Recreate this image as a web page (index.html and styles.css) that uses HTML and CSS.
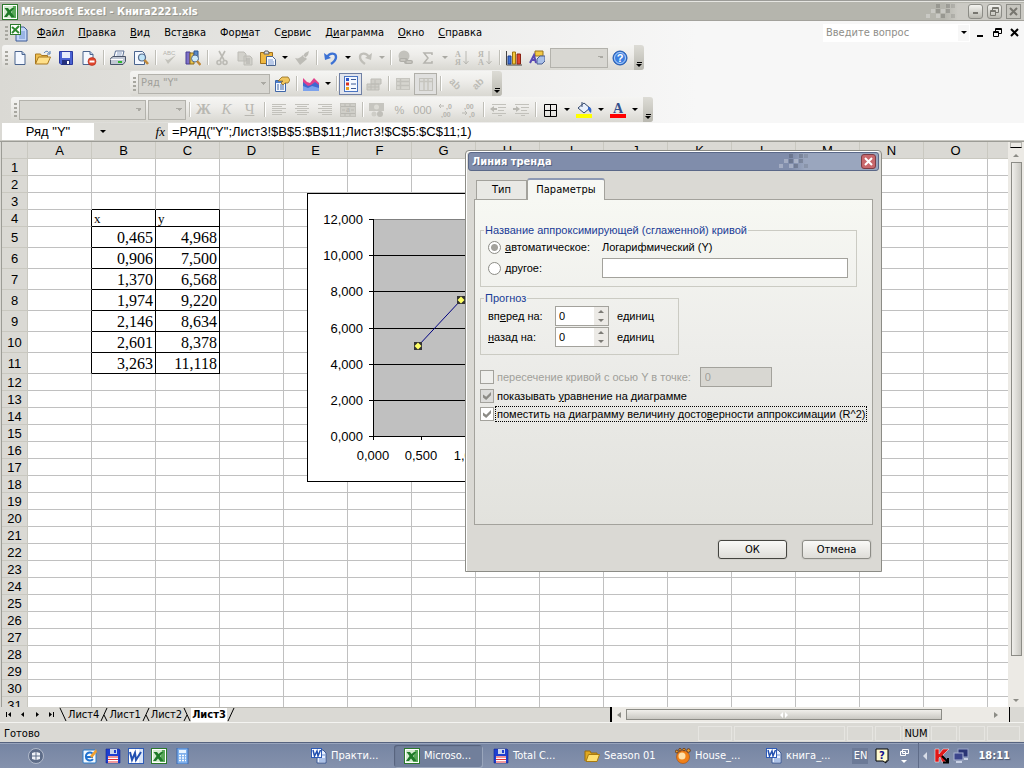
FILE: index.html
```html
<!DOCTYPE html>
<html lang="ru">
<head>
<meta charset="utf-8">
<title>Microsoft Excel - Книга2221.xls</title>
<link rel="stylesheet" href="styles.css">
</head>
<body>
<svg class="sprite" aria-hidden="true">
  <symbol id="i-excel" viewBox="0 0 16 16"><rect x=".5" y=".5" width="15" height="15" fill="#fff" stroke="#2c7a2c"/><rect x="2" y="2" width="12" height="12" fill="#d4ead0"/><path d="M11 2h3v12H9z" fill="#58a858"/><path d="M2.500 4H6l1.500 2L10 4h2.500L9 8l3.500 5H9L7 10.500 5 13H2l3.500-5z" fill="#1f7a28"/></symbol>
  <symbol id="i-word" viewBox="0 0 16 16"><rect x=".5" y=".5" width="15" height="15" fill="#fff" stroke="#2f5cb8"/><rect x="11" y="1" width="4" height="14" fill="#dbe6f8"/><path d="M2 4l2 8 3-7 1 7 5-8" fill="none" stroke="#2250b0" stroke-width="2"/></symbol>
  <symbol id="i-xldoc" viewBox="0 0 18 18"><path d="M6 3h8l3 3v11H6z" fill="#c4d6f8" stroke="#3c5a96"/><path d="M9 8h6M9 10h6M9 12h6M9 14h6" stroke="#6f92d0"/><rect x=".5" y=".5" width="10" height="10" fill="#fff" stroke="#2c7a2c"/><path d="M2 3l7 6M9 2L2 9" stroke="#2f8a30" stroke-width="2"/></symbol>
  <symbol id="i-wdoc" viewBox="0 0 16 16"><path d="M6 2h6l3 3v10H6z" fill="#e8f0ff" stroke="#3c5a96"/><path d="M11 7h3M8 11h6M8 13h6" stroke="#6f92d0"/><rect x=".5" y=".5" width="10" height="9" fill="#fff" stroke="#2f5cb8"/><path d="M2 2l1.500 6L6 3l1 5 2.500-6" fill="none" stroke="#2250b0" stroke-width="1.500"/></symbol>
  <symbol id="i-new" viewBox="0 0 16 16"><path d="M3 1.500h7l3 3v10H3z" fill="#f4f8ff" stroke="#4a648e"/><path d="M10 1.500v3h3" fill="#b9cbe8" stroke="#4a648e"/></symbol>
  <symbol id="i-open" viewBox="0 0 16 16"><path d="M.5 14V4h5l1 1.500h6V8" fill="#f0c050" stroke="#a87820"/><path d="M.5 14l3-7H15.500l-3 7z" fill="#ffe08a" stroke="#a87820"/><path d="M9 3c2-2.500 4-2 5 0m1-2v3h-3" fill="none" stroke="#4a76b0"/></symbol>
  <symbol id="i-save" viewBox="0 0 16 16"><path d="M1.500 1.500h13v13H3l-1.500-1.500z" fill="#4a62d2" stroke="#2b3aa0"/><rect x="4" y="2" width="8" height="6" fill="#e6ecfb"/><rect x="4" y="10" width="8" height="5" fill="#24307c"/><rect x="9" y="11" width="2" height="3" fill="#fff"/></symbol>
  <symbol id="i-perm" viewBox="0 0 16 16"><path d="M2 1.500h7l3 3v10H2z" fill="#f4f8ff" stroke="#4a648e"/><path d="M9 1.500v3h3" fill="#b9cbe8" stroke="#4a648e"/><circle cx="11" cy="11.500" r="4" fill="#e0452c" stroke="#b02a18" stroke-width=".6"/><path d="M8.500 11.500h5" stroke="#fff" stroke-width="2"/></symbol>
  <symbol id="i-print" viewBox="0 0 16 16"><path d="M4 7l1.500-6H14l-1.500 6z" fill="#fff" stroke="#5a6f94"/><path d="M7 3h5M6.500 5h5" stroke="#8ba0c4"/><path d="M.5 8.500L3 6.500h12.500v5L13 14.500H.5z" fill="#c2c8d4" stroke="#4a5468"/><path d="M.5 9.500H13" stroke="#fff"/><path d="M8 12h4" stroke="#2fb52f" stroke-width="2"/></symbol>
  <symbol id="i-preview" viewBox="0 0 16 16"><path d="M1.500 1.500h8l2 2v11h-10z" fill="#f4f8ff" stroke="#4a648e"/><circle cx="9" cy="7.500" r="3.500" fill="#bfe4f8" stroke="#566b8c" stroke-width="1.200"/><path d="M11.500 10l3.500 4" stroke="#c08838" stroke-width="2.500"/></symbol>
  <symbol id="i-spell" viewBox="0 0 16 16"><text x="1" y="5" class="glyph-s">ABC</text><path d="M3 9l3 5 8-9-8 5z" fill="#c3c2bb"/></symbol>
  <symbol id="i-research" viewBox="0 0 16 16"><path d="M1 2h4v12H1z" fill="#7d70c8" stroke="#483c92"/><path d="M5 3h4v11H5z" fill="#e8c24c" stroke="#8a6b1a"/><path d="M9 1h4v9H9z" fill="#5a89c8" stroke="#2d568e"/><circle cx="10" cy="8.500" r="3.500" fill="#cdeafa" stroke="#566b8c"/><path d="M12 11l3.500 4" stroke="#c08838" stroke-width="2.500"/></symbol>
  <symbol id="i-cut" viewBox="0 0 16 16"><g fill="none" stroke="#bbbab4" stroke-width="1.600"><path d="M5 1l5 9M11 1L6 10"/><circle cx="5" cy="12.500" r="2"/><circle cx="11" cy="12.500" r="2"/></g></symbol>
  <symbol id="i-copy" viewBox="0 0 16 16"><path d="M1 2h6l2 2v7H1zM7 6h6l2 2v7H7z" fill="#d2d1cb" stroke="#bdbcb6"/><path d="M9 9h4M9 11h4M9 13h4" stroke="#b0afaa"/></symbol>
  <symbol id="i-paste" viewBox="0 0 16 16"><path d="M.5 2.500h12v11H.5z" fill="#f0b840" stroke="#a0701c"/><path d="M4 3l1-2h3l1 2v1H4z" fill="#d8dce4" stroke="#66615a"/><path d="M6.500 6.500h6l3 3v6h-9z" fill="#f6f9ff" stroke="#4a648e"/><path d="M8 10h5M8 12h6M8 14h6" stroke="#7c9ad0"/></symbol>
  <symbol id="i-brush" viewBox="0 0 16 16"><path d="M15 1l-4 2-2 3 2 2 3-3zM9 5l4 4-7 6-5-7c3 1 5 0 8-3z" fill="#bdbcb6"/></symbol>
  <symbol id="i-undo" viewBox="0 0 16 16"><path d="M4 7c3-5 9-4 9 0 0 3-2 5-5 7" fill="none" stroke="#3d72d4" stroke-width="2.400"/><path d="M1 3l1 7 6-2z" fill="#3d72d4"/></symbol>
  <symbol id="i-redo" viewBox="0 0 16 16"><path d="M12 7C9 2 3 3 3 7c0 3 2 5 5 7" fill="none" stroke="#c0bfb9" stroke-width="2.400"/><path d="M15 3l-1 7-6-2z" fill="#c0bfb9"/></symbol>
  <symbol id="i-link" viewBox="0 0 16 16"><circle cx="7" cy="6" r="5.500" fill="#c3c2bc"/><path d="M4 10h5M9 12h5" stroke="#b0afa9" stroke-width="4" stroke-linecap="round"/><path d="M4 10h4M10 12h4" stroke="#dedcd6" stroke-linecap="round"/></symbol>
  <symbol id="i-sum" viewBox="0 0 16 16"><path d="M12 5V3H4l4 5-4 5h8v-2" fill="none" stroke="#b5b4ae" stroke-width="1.500"/></symbol>
  <symbol id="i-az" viewBox="0 0 16 16"><text x="1" y="7" class="glyph-m">А</text><text x="1" y="15" class="glyph-m">Я</text><path d="M12 1v13M9.500 11l2.500 3 2.500-3" fill="none" stroke="#b9b8b2"/></symbol>
  <symbol id="i-za" viewBox="0 0 16 16"><text x="1" y="7" class="glyph-m">Я</text><text x="1" y="15" class="glyph-m">А</text><path d="M12 1v13M9.500 11l2.500 3 2.500-3" fill="none" stroke="#b9b8b2"/></symbol>
  <symbol id="i-chart" viewBox="0 0 16 16"><path d="M.5 1v14H16" fill="none" stroke="#444"/><path d="M2 6h3v8H2z" fill="#3f72d8" stroke="#1d3f8c"/><path d="M6.500 2h3v12h-3z" fill="#f5c83c" stroke="#9c7410"/><path d="M11 4h3.500v10H11z" fill="#e0452c" stroke="#8c2212"/></symbol>
  <symbol id="i-draw" viewBox="0 0 16 16"><path d="M6 1h8v5H6z" fill="#f3c944" stroke="#98741c"/><path d="M8 9l3-3h5v5l-3 3H8z" fill="#a9c0e8" stroke="#4a5f94"/><path d="M1 13L5 5l2 8M2.500 10h4" fill="none" stroke="#5a4bb4" stroke-width="2"/></symbol>
  <symbol id="i-help" viewBox="0 0 16 16"><circle cx="8" cy="8" r="7" fill="#3c7fe0" stroke="#1f56ac"/><circle cx="8" cy="8" r="5.500" fill="none" stroke="#d5e6fc" stroke-width=".8"/><text x="8" y="12" class="glyph-q">?</text></symbol>
  <symbol id="i-props" viewBox="0 0 16 16"><path d="M1.500 4.500h10v11h-10z" fill="#f4f8ff" stroke="#3e66a8"/><path d="M2 6h9" stroke="#4a7ed0" stroke-width="2"/><path d="M3 9h2M6 9h4M3 11h2M6 11h4M3 13h2M6 13h4" stroke="#3e66a8"/><path d="M4 5l4-4h6l2 3-2 3h-3L9 9 7 7l2-2z" fill="#f0c660" stroke="#8f6a20" stroke-width=".8"/></symbol>
  <symbol id="i-area" viewBox="0 0 16 16"><path d="M0 2l4 4 3 1 4-5 5 5v4H0z" fill="#e2408c"/><path d="M0 6l5 4 3-1 4-3 4 3v6H0z" fill="#3f68d0"/><path d="M0 10l5 2 4-2 7 2v3H0z" fill="#7ca2ec"/></symbol>
  <symbol id="i-legend" viewBox="0 0 16 16"><rect x="1.500" y=".5" width="13" height="15" fill="#f4f8ff" stroke="#4a74c0"/><path d="M3 2h3v3H3z" fill="#2f56c8"/><path d="M3 6.500h3v3H3z" fill="#d83020"/><path d="M3 11h3v3H3z" fill="#e8a020"/><path d="M8 3.500h5M8 8h5M8 12.500h5" stroke="#3c5a96"/></symbol>
  <symbol id="i-dtable" viewBox="0 0 16 16"><path d="M5 3h10v5H5zM1 8h12v6H1z" fill="#d0cfc9" stroke="#bdbcb6"/><path d="M5 8v6M9 4v10M2 11h11" stroke="#bdbcb6"/></symbol>
  <symbol id="i-rows" viewBox="0 0 16 16"><rect x="1.500" y="2.500" width="13" height="11" fill="#d6d5cf" stroke="#c6c5bf"/><path d="M2 5.500h12M5.500 3v10M2 9.500h12" stroke="#c2c1bb" stroke-width="1.500"/></symbol>
  <symbol id="i-cols" viewBox="0 0 16 16"><rect x="1.500" y="2.500" width="13" height="12" fill="#dcdcda" stroke="#c2c1bb"/><path d="M2 5.500h12M6 3v11M10 3v11" stroke="#c6c5bf" stroke-width="1.500"/></symbol>
  <symbol id="i-ang1" viewBox="0 0 16 16"><text x="8" y="11" transform="rotate(45 8 8)" class="glyph-l">ab</text></symbol>
  <symbol id="i-ang2" viewBox="0 0 16 16"><text x="8" y="11" transform="rotate(-45 8 8)" class="glyph-l">ab</text></symbol>
  <symbol id="i-left" viewBox="0 0 16 16"><path d="M1 2.500h14M1 4.500h10M1 6.500h14M1 8.500h10M1 10.500h14M1 12.500h10" stroke="#c2c1bb"/></symbol>
  <symbol id="i-center" viewBox="0 0 16 16"><path d="M1 2.500h14M3 4.500h10M1 6.500h14M3 8.500h10M1 10.500h14M3 12.500h10" stroke="#c2c1bb"/></symbol>
  <symbol id="i-right" viewBox="0 0 16 16"><path d="M1 2.500h14M5 4.500h10M1 6.500h14M5 8.500h10M1 10.500h14M5 12.500h10" stroke="#c2c1bb"/></symbol>
  <symbol id="i-merge" viewBox="0 0 16 16"><rect x=".5" y="1.500" width="15" height="13" fill="#cfcec8" stroke="#c2c1bb"/><path d="M1 4.500h14M1 11.500h14M5 2v2M10 2v2M5 12v2M10 12v2M2 8h3M11 8h3" stroke="#b9b8b2"/><text x="6" y="10" class="glyph-m">а</text></symbol>
  <symbol id="i-cur" viewBox="0 0 16 16"><rect x="0" y="1" width="15" height="8" fill="#c6c5bf"/><circle cx="7.500" cy="5" r="2.500" fill="#dcdbd5"/><circle cx="11" cy="12" r="3" fill="#c0bfb9"/><circle cx="5" cy="12" r="2.500" fill="#cecdc7"/></symbol>
  <symbol id="i-dec1" viewBox="0 0 16 16"><path d="M6 4H1m2-2L1 4l2 2" fill="none" stroke="#b9b8b2"/><text x="8" y="7" class="glyph-n">,0</text><text x="3" y="15" class="glyph-n">,00</text></symbol>
  <symbol id="i-dec2" viewBox="0 0 16 16"><text x="3" y="7" class="glyph-n">,00</text><path d="M1 11h5m-2-2l2 2-2 2" fill="none" stroke="#b9b8b2"/><text x="8" y="15" class="glyph-n">,0</text></symbol>
  <symbol id="i-ind1" viewBox="0 0 16 16"><path d="M2 2.500h14M8 5.500h8M8 8.500h6M2 11.500h14M8 13.500h4" stroke="#c2c1bb"/><path d="M0 7l4-3v2h3v2H4v2z" fill="#b9b8b2"/></symbol>
  <symbol id="i-ind2" viewBox="0 0 16 16"><path d="M2 2.500h14M8 5.500h8M8 8.500h6M2 11.500h14M8 13.500h4" stroke="#c2c1bb"/><path d="M7 7L3 4v2H0v2h3v2z" fill="#b9b8b2"/></symbol>
  <symbol id="i-borders" viewBox="0 0 16 16"><path d="M2.500 2.500h12v12h-12zM8.500 2v12M2 8.500h12" fill="none" stroke="#000"/></symbol>
  <symbol id="i-fill" viewBox="0 0 16 16"><path d="M2 6l6-5 6 5-6 5z" fill="#e8f0fc" stroke="#34496e"/><path d="M6 0v5" stroke="#34496e"/><path d="M12 5c3 0 4 2 3 6-2-1-2-3-3-3z" fill="#3768c8"/><rect x="0" y="12" width="16" height="4" fill="#ff0"/></symbol>
  <symbol id="i-font" viewBox="0 0 16 16"><text x="8" y="11" class="glyph-a">A</text><rect x="0" y="12" width="16" height="4" fill="red"/></symbol>
  <symbol id="i-floppy" viewBox="0 0 16 16"><path d="M1 1h13l1 1v13H1z" fill="#1f3fd0" stroke="#122690" stroke-width=".6"/><rect x="5" y="1" width="7" height="5" fill="#c8d4ec"/><rect x="9" y="2" width="2" height="3" fill="#1f3fd0"/><rect x="3" y="8" width="10" height="7" fill="#fff"/><path d="M3 9h10M3 11.500h10M3 14h10" stroke="#e03038"/></symbol>
  <symbol id="i-oe" viewBox="0 0 16 16"><rect x="1" y="2" width="13" height="13" rx="1" fill="#f4faff" stroke="#2a7ac8"/><path d="M11 11a4 4 0 1 1 0-5M4 9h7" fill="none" stroke="#1f72d0" stroke-width="2"/><path d="M8 8l6-7 1 3-5 6z" fill="#f0a030"/></symbol>
  <symbol id="i-calc" viewBox="0 0 16 16"><rect x="3" y="0" width="11" height="16" fill="#7fb0ec" stroke="#2d62b0" stroke-width=".8"/><rect x="5" y="2" width="7" height="3" fill="#e8f4ff"/><path d="M5 7.500h7M5 10h7M5 12.500h7" stroke="#fff" stroke-dasharray="2 1" stroke-width="1.500"/></symbol>
  <symbol id="i-folder" viewBox="0 0 16 16"><path d="M1 13V3h5l1 2h6v3" fill="#e0a820" stroke="#9a6c08"/><path d="M2 13.500L4.500 6.500H15.500L13 13.500z" fill="#ffe070" stroke="#a87a10"/></symbol>
  <symbol id="i-gom" viewBox="0 0 16 16"><circle cx="8" cy="9" r="6.500" fill="#f08018" stroke="#a84c08" stroke-width=".6"/><circle cx="7" cy="8" r="3.500" fill="#ffe0a8"/><g fill="#e8a030" stroke="#5a2c10" stroke-width=".8"><circle cx="1.800" cy="3.500" r="1.400"/><circle cx="5" cy="1.800" r="1.300"/><circle cx="9" cy="1.500" r="1.300"/><circle cx="13.500" cy="2.500" r="1.800"/></g></symbol>
  <symbol id="i-mosaic" viewBox="0 0 30 15"><g fill="#000" fill-opacity=".16"><path d="M10 0h4v4h-4zM20 5h4v4h-4zM15 10h4v4h-4zM20 0h4v4h-4zM10 5h4v4h-4z"/></g><path d="M25 0h4v4h-4z" fill="#000" fill-opacity=".1"/><g fill="#fff" fill-opacity=".28"><path d="M5 5h4v4H5zM0 10h4v4H0zM10 10h4v4h-4zM15 5h4v4h-4z"/></g><path d="M25 10h4v4h-4z" fill="#000" fill-opacity=".1"/></symbol>
  <symbol id="i-restore" viewBox="0 0 9 9"><path d="M2.500 3V.5h6v5H6M2 1.500h6" fill="none" stroke="currentColor"/><path d="M.5 3.500h5v5h-5zM0 4.500h6" fill="none" stroke="currentColor"/></symbol>
  <symbol id="i-x" viewBox="0 0 9 9"><path d="M1 1l7 7M8 1L1 8" stroke="currentColor" stroke-width="2"/></symbol>
  <symbol id="i-min" viewBox="0 0 9 9"><path d="M2 6h5" stroke="currentColor" stroke-width="2"/></symbol>
  <symbol id="i-lo" viewBox="0 0 9 9"><path d="M1 8h6" stroke="currentColor" stroke-width="2"/></symbol>
</svg>

<div class="app">
  <header class="titlebar">
    <svg class="ic"><use href="#i-excel"/></svg>
    <h1>Microsoft Excel - Книга2221.xls</h1>
    <div class="title-end">
      <svg class="mosaic"><use href="#i-mosaic"/></svg>
      <button class="win" aria-label="Свернуть"><svg><use href="#i-min"/></svg></button>
      <button class="win" aria-label="Восстановить"><svg><use href="#i-restore"/></svg></button>
      <button class="win flat" aria-label="Закрыть"><svg><use href="#i-x"/></svg></button>
    </div>
  </header>

  <div class="bars">
    <nav class="menubar">
      <span class="grip"></span>
      <svg class="docicon"><use href="#i-xldoc"/></svg>
      <button><u>Ф</u>айл</button><button><u>П</u>равка</button><button><u>В</u>ид</button><button>Вст<u>а</u>вка</button><button>Фор<u>м</u>ат</button><button>С<u>е</u>рвис</button><button>Д<u>и</u>аграмма</button><button><u>О</u>кно</button><button><u>С</u>правка</button>
      <div class="menu-end">
        <div class="ask"><input type="text" placeholder="Введите вопрос" aria-label="Введите вопрос"><button class="drop" aria-label="Список вопросов"></button></div>
        <button class="mdi" aria-label="Свернуть окно"><svg><use href="#i-lo"/></svg></button>
        <button class="mdi" aria-label="Восстановить окно"><svg><use href="#i-restore"/></svg></button>
        <button class="mdi" aria-label="Закрыть окно"><svg><use href="#i-x"/></svg></button>
      </div>
    </nav>

    <div class="toolbar" role="toolbar" aria-label="Стандартная">
      <span class="grip"></span>
      <button class="tb" aria-label="Создать"><svg class="ic"><use href="#i-new"/></svg></button>
      <button class="tb" aria-label="Открыть"><svg class="ic"><use href="#i-open"/></svg></button>
      <button class="tb" aria-label="Сохранить"><svg class="ic"><use href="#i-save"/></svg></button>
      <button class="tb" aria-label="Разрешение"><svg class="ic"><use href="#i-perm"/></svg></button>
      <span class="sep"></span>
      <button class="tb" aria-label="Печать"><svg class="ic"><use href="#i-print"/></svg></button>
      <button class="tb" aria-label="Просмотр"><svg class="ic"><use href="#i-preview"/></svg></button>
      <span class="sep"></span>
      <button class="tb" aria-label="Орфография" disabled><svg class="ic"><use href="#i-spell"/></svg></button>
      <button class="tb" aria-label="Справочные материалы"><svg class="ic"><use href="#i-research"/></svg></button>
      <span class="sep"></span>
      <button class="tb" aria-label="Вырезать" disabled><svg class="ic"><use href="#i-cut"/></svg></button>
      <button class="tb" aria-label="Копировать" disabled><svg class="ic"><use href="#i-copy"/></svg></button>
      <button class="tb" aria-label="Вставить"><svg class="ic"><use href="#i-paste"/></svg></button>
      <button class="drop" aria-label="Варианты вставки"></button>
      <button class="tb" aria-label="Формат по образцу" disabled><svg class="ic"><use href="#i-brush"/></svg></button>
      <span class="sep"></span>
      <button class="tb" aria-label="Отменить"><svg class="ic"><use href="#i-undo"/></svg></button>
      <button class="drop" aria-label="Список отмены"></button>
      <button class="tb" aria-label="Вернуть" disabled><svg class="ic"><use href="#i-redo"/></svg></button>
      <button class="drop" aria-label="Список возврата" disabled></button>
      <span class="sep"></span>
      <button class="tb" aria-label="Гиперссылка" disabled><svg class="ic"><use href="#i-link"/></svg></button>
      <button class="tb" aria-label="Автосумма" disabled><svg class="ic"><use href="#i-sum"/></svg></button>
      <button class="drop" aria-label="Функции" disabled></button>
      <button class="tb" aria-label="По возрастанию" disabled><svg class="ic"><use href="#i-az"/></svg></button>
      <button class="tb" aria-label="По убыванию" disabled><svg class="ic"><use href="#i-za"/></svg></button>
      <span class="sep"></span>
      <button class="tb" aria-label="Мастер диаграмм"><svg class="ic"><use href="#i-chart"/></svg></button>
      <button class="tb" aria-label="Рисование"><svg class="ic"><use href="#i-draw"/></svg></button>
      <select class="combo zoom" aria-label="Масштаб" disabled><option></option></select>
      <button class="tb" aria-label="Справка"><svg class="ic"><use href="#i-help"/></svg></button>
      <button class="cap" aria-label="Параметры панели"></button>
    </div>

    <div class="toolbar chartbar" role="toolbar" aria-label="Диаграммы">
      <span class="grip"></span>
      <select class="combo series" aria-label="Элементы диаграммы" disabled><option>Ряд "Y"</option></select>
      <button class="tb" aria-label="Формат ряда"><svg class="ic"><use href="#i-props"/></svg></button>
      <span class="sep"></span>
      <button class="tb" aria-label="Тип диаграммы"><svg class="ic"><use href="#i-area"/></svg></button>
      <button class="drop" aria-label="Типы"></button>
      <span class="sep"></span>
      <button class="tb on" aria-label="Легенда"><svg class="ic"><use href="#i-legend"/></svg></button>
      <button class="tb" aria-label="Таблица данных" disabled><svg class="ic"><use href="#i-dtable"/></svg></button>
      <span class="sep"></span>
      <button class="tb" aria-label="По строкам" disabled><svg class="ic"><use href="#i-rows"/></svg></button>
      <button class="tb on" aria-label="По столбцам" disabled><svg class="ic"><use href="#i-cols"/></svg></button>
      <span class="sep"></span>
      <button class="tb" aria-label="Текст сверху вниз" disabled><svg class="ic"><use href="#i-ang1"/></svg></button>
      <button class="tb" aria-label="Текст снизу вверх" disabled><svg class="ic"><use href="#i-ang2"/></svg></button>
      <button class="cap" aria-label="Параметры панели"></button>
    </div>

    <div class="toolbar formatbar" role="toolbar" aria-label="Форматирование">
      <span class="grip"></span>
      <select class="combo font" aria-label="Шрифт" disabled><option></option></select>
      <select class="combo size" aria-label="Размер" disabled><option></option></select>
      <span class="sep"></span>
      <button class="tb letter" disabled><b>Ж</b></button>
      <button class="tb letter" disabled><i>К</i></button>
      <button class="tb letter" disabled><u>Ч</u></button>
      <span class="sep"></span>
      <button class="tb" aria-label="По левому краю" disabled><svg class="ic"><use href="#i-left"/></svg></button>
      <button class="tb" aria-label="По центру" disabled><svg class="ic"><use href="#i-center"/></svg></button>
      <button class="tb" aria-label="По правому краю" disabled><svg class="ic"><use href="#i-right"/></svg></button>
      <button class="tb" aria-label="Объединить" disabled><svg class="ic"><use href="#i-merge"/></svg></button>
      <span class="sep"></span>
      <button class="tb" aria-label="Денежный формат" disabled><svg class="ic"><use href="#i-cur"/></svg></button>
      <button class="tb num" disabled>%</button>
      <button class="tb num" disabled>000</button>
      <button class="tb" aria-label="Увеличить разрядность" disabled><svg class="ic"><use href="#i-dec1"/></svg></button>
      <button class="tb" aria-label="Уменьшить разрядность" disabled><svg class="ic"><use href="#i-dec2"/></svg></button>
      <span class="sep"></span>
      <button class="tb" aria-label="Уменьшить отступ" disabled><svg class="ic"><use href="#i-ind1"/></svg></button>
      <button class="tb" aria-label="Увеличить отступ" disabled><svg class="ic"><use href="#i-ind2"/></svg></button>
      <span class="sep"></span>
      <button class="tb" aria-label="Границы"><svg class="ic"><use href="#i-borders"/></svg></button>
      <button class="drop" aria-label="Виды границ"></button>
      <button class="tb" aria-label="Цвет заливки"><svg class="ic"><use href="#i-fill"/></svg></button>
      <button class="drop" aria-label="Цвета заливки"></button>
      <button class="tb" aria-label="Цвет шрифта"><svg class="ic"><use href="#i-font"/></svg></button>
      <button class="drop" aria-label="Цвета шрифта"></button>
      <button class="cap" aria-label="Параметры панели"></button>
    </div>
  </div>

  <div class="formulabar">
    <input class="namebox" type="text" value='Ряд "Y"' aria-label="Имя">
    <button class="drop" aria-label="Список имён"></button>
    <button class="fx" aria-label="Вставка функции"><i>fx</i></button>
    <input class="formula" type="text" value='=РЯД("Y";Лист3!$B$5:$B$11;Лист3!$C$5:$C$11;1)' aria-label="Формула">
  </div>

  <main class="work">
    <div class="sheet">
      <table class="grid" id="grid"></table>
      <svg class="chart" width="400" height="289" viewBox="0 0 400 289" role="img" aria-label="Диаграмма">
        <rect x=".5" y=".5" width="399" height="288" fill="#fff" stroke="#000"/>
        <rect x="66" y="26" width="310" height="217" fill="#c0c0c0"/>
        <path d="M66 26.500h310" stroke="#808080"/>
        <path d="M62 62.500h314M62 98.500h314M62 135.500h314M62 171.500h314M62 207.500h314M62 243.500h314M62 26.500h4M66.500 26v221M114.500 243v4M162.500 243v4" fill="none" stroke="#000"/>
        <path d="M111 153L154 107" stroke="#000080"/>
        <g fill="#333"><path d="M107 149h8v8h-8zM150 103h8v8h-8z"/></g>
        <g fill="#ffff66"><path d="M111 149.500l3.500 3.500-3.500 3.500-3.500-3.500zM154 103.500l3.500 3.500-3.500 3.500-3.500-3.500z"/></g>
        <g class="ylab">
          <text x="56" y="31">12,000</text><text x="56" y="67">10,000</text><text x="56" y="103">8,000</text><text x="56" y="140">6,000</text><text x="56" y="176">4,000</text><text x="56" y="212">2,000</text><text x="56" y="248">0,000</text>
        </g>
        <g class="xlab"><text x="66" y="267">0,000</text><text x="114" y="267">0,500</text><text x="163" y="267">1,000</text></g>
      </svg>
    </div>
    <div class="vscroll"><span class="split"></span><button class="arrow up" aria-label="Вверх"></button><div class="track"><span class="thumb"></span></div><button class="arrow down" aria-label="Вниз"></button></div>
  </main>

  <div class="tabsbar">
    <div class="tabnav">
      <button aria-label="Первый лист"><svg viewBox="0 0 8 7"><path d="M1 1h1v5H1zM6 1v5L3 3.500z"/></svg></button>
      <button aria-label="Предыдущий лист"><svg viewBox="0 0 8 7"><path d="M5 1v5L2 3.500z"/></svg></button>
      <button aria-label="Следующий лист"><svg viewBox="0 0 8 7"><path d="M3 1v5l3-2.500z"/></svg></button>
      <button aria-label="Последний лист"><svg viewBox="0 0 8 7"><path d="M6 1h1v5H6zM2 1v5l3-2.500z"/></svg></button>
    </div>
    <div class="tabs"><svg class="edge" viewBox="0 0 8 14"><path d="M1 0l6 13"/></svg><button>Лист4</button><svg class="edge" viewBox="0 0 8 14"><path d="M7 0L1 13M4 7l3 6"/></svg><button>Лист1</button><svg class="edge" viewBox="0 0 8 14"><path d="M7 0L1 13M4 7l3 6"/></svg><button>Лист2</button><svg class="edge" viewBox="0 0 8 14"><path d="M1 0l6 13M4 7l-3 6"/></svg><button class="current">Лист3</button><svg class="edge" viewBox="0 0 8 14"><path d="M7 0L1 13"/></svg></div>
    <div class="hscroll"><button class="arrow lft" aria-label="Влево"></button><div class="track"><span class="thumb"><svg viewBox="0 0 8 6"><path d="M3 0v6L0 3zM5 0v6l3-3z"/></svg></span></div><button class="arrow rgt" aria-label="Вправо"></button></div>
    <span class="corner"></span>
  </div>

  <footer class="status">
    <span class="ready">Готово</span>
    <div class="panes"><span class="p1"></span><span class="p2"></span><span class="p3"></span><span class="p3"></span><span class="p3">NUM</span><span class="p3"></span><span class="p3"></span><span class="p4"></span></div>
  </footer>

  <footer class="taskbar">
    <button class="start" aria-label="Пуск"><svg viewBox="0 0 16 16"><circle cx="8" cy="8" r="7.500" fill="#5d6c88" stroke="#c3cad8" stroke-width=".8"/><path d="M4 5l3.500-1v3.500H4zM8.500 4L12 5v2.500H8.500zM4 8.500h3.500V12L4 11zM8.500 8.500H12V11l-3.500 1z" fill="#eef1f6"/></svg></button>
    <div class="quick">
      <button aria-label="Outlook Express"><svg class="ic"><use href="#i-oe"/></svg></button>
      <button aria-label="Total Commander"><svg class="ic"><use href="#i-floppy"/></svg></button>
      <button aria-label="Word"><svg class="ic"><use href="#i-word"/></svg></button>
      <button aria-label="Excel"><svg class="ic"><use href="#i-excel"/></svg></button>
      <button aria-label="Калькулятор"><svg class="ic"><use href="#i-calc"/></svg></button>
    </div>
    <div class="tasks">
      <button><svg class="ic"><use href="#i-wdoc"/></svg>Практи...</button>
      <button class="active"><svg class="ic"><use href="#i-excel"/></svg>Microso...</button>
      <button><svg class="ic"><use href="#i-floppy"/></svg>Total C...</button>
      <button><svg class="ic"><use href="#i-folder"/></svg>Season 01</button>
      <button><svg class="ic"><use href="#i-gom"/></svg>House_...</button>
      <button><svg class="ic"><use href="#i-wdoc"/></svg>книга_...</button>
    </div>
    <div class="lang">
      <button class="en">EN</button>
      <svg class="ic" viewBox="0 0 16 16"><path d="M2 1h12v12h-2v2l-3-2H2z" fill="#fffbd0" stroke="#000"/><text x="8" y="11" class="glyph-k">?</text></svg>
      <svg class="ic" viewBox="0 0 16 16"><path d="M6.500 1.500h6v4h-6zM4.500 3.500h5v4h-5z" fill="#7f8ca8" stroke="#fff"/><path d="M5 12h6l-3 3z" fill="#fff"/></svg>
    </div>
    <div class="tray">
      <span class="chev"></span>
      <svg class="ic" viewBox="0 0 16 16"><path d="M1 1h4v5l4-5h6L9 7l3 7H8L6 9l-1 1v4H1z" fill="#e01818" stroke="#fff" stroke-width=".5"/><path d="M8 8l6 6m0-4v4.500H9" fill="none" stroke="#000" stroke-width="2"/></svg>
      <svg class="ic" viewBox="0 0 16 16"><rect x="5" y="1" width="10" height="8" fill="#2a3474" stroke="#98a4c8"/><rect x="1" y="5" width="9" height="7" fill="#3c468c" stroke="#a8b2d0"/><path d="M3 14h6M11 11h4" stroke="#c8d0e4" stroke-width="2"/></svg>
      <time>18:11</time>
    </div>
  </footer>

  <section class="dialog" role="dialog" aria-labelledby="dlg-title">
    <div class="dlg-title">
      <h2 id="dlg-title">Линия тренда</h2>
      <div class="dlg-end"><svg class="mosaic"><use href="#i-mosaic"/></svg><button class="close" aria-label="Закрыть"><svg><use href="#i-x"/></svg></button></div>
    </div>
    <div class="dlg-tabs" role="tablist"><button role="tab">Тип</button><button role="tab" class="sel" aria-selected="true">Параметры</button></div>
    <div class="panel">
      <fieldset class="name">
        <legend>Название аппроксимирующей (сглаженной) кривой</legend>
        <input type="radio" name="nm" id="r1" checked><label for="r1"><u>а</u>втоматическое:</label><span>Логарифмический (Y)</span>
        <input type="radio" name="nm" id="r2"><label for="r2"><u>д</u>ругое:</label><input class="field" type="text" aria-label="Название кривой">
      </fieldset>
      <fieldset class="forecast">
        <legend>Прогноз</legend>
        <label for="fw">вп<u>е</u>ред на:</label><div class="spin"><input id="fw" type="text" value="0"><span><button aria-label="Больше"></button><button class="dn" aria-label="Меньше"></button></span></div><span>единиц</span>
        <label for="bw"><u>н</u>азад на:</label><div class="spin"><input id="bw" type="text" value="0"><span><button aria-label="Больше"></button><button class="dn" aria-label="Меньше"></button></span></div><span>единиц</span>
      </fieldset>
      <div class="checks">
        <div class="check off"><input type="checkbox" id="c1" disabled><label for="c1">пересечение кривой с осью Y в точке:</label><input class="field" type="text" value="0" aria-label="Точка пересечения" disabled></div>
        <div class="check"><input type="checkbox" class="hot" id="c2" checked><label for="c2">показывать <u>у</u>равнение на диаграмме</label></div>
        <div class="check"><input type="checkbox" id="c3" checked><label class="focus" for="c3">поместить на диаграмму величину досто<u>в</u>ерности аппроксимации (R^2)</label></div>
      </div>
    </div>
    <div class="dlg-buttons"><button class="ok">ОК</button><button>Отмена</button></div>
  </section>
</div>
<script src="sheet.js"></script>
</body>
</html>
```
FILE: sheet.js
```js
const columns = 'ABCDEFGHIJKLMNOP'.split('');
const data = {
  4: ['x', 'y'],
  5: ['0,465', '4,968'],
  6: ['0,906', '7,500'],
  7: ['1,370', '6,568'],
  8: ['1,974', '9,220'],
  9: ['2,146', '8,634'],
  10: ['2,601', '8,378'],
  11: ['3,263', '11,118']
};

const grid = document.getElementById('grid');
const head = grid.createTHead().insertRow();
['', ...columns].forEach((name) => {
  const th = document.createElement('th');
  th.textContent = name === 'P' ? '' : name;
  head.append(th);
});

const body = grid.createTBody();
for (let r = 1; r <= 31; r++) {
  const row = body.insertRow();
  if (r >= 5 && r <= 11) row.className = 'tall';
  const th = document.createElement('th');
  th.textContent = r;
  row.append(th);
  columns.forEach((name, c) => {
    const cell = row.insertCell();
    const inTable = c === 1 || c === 2;
    if (inTable && data[r]) cell.textContent = data[r][c - 1];
    if (inTable && r >= 3 && r <= 11) cell.classList.add('line-b');
    if (c <= 2 && r >= 4 && r <= 11) cell.classList.add('line-r');
  });
}
```
FILE: styles.css
```css
* { box-sizing: border-box; }
body { margin: 0; overflow: hidden; font: 11px/14px "DejaVu Sans Condensed", "DejaVu Sans", sans-serif; color: #000; }
button, input, select { font: inherit; color: inherit; margin: 0; padding: 0; border: 0; border-radius: 0; background: none; appearance: none; }
h1, h2 { margin: 0; font-size: 11px; font-weight: bold; }
.sprite { display: none; }
.ic { width: 16px; height: 16px; flex: none; display: block; }
.app { position: relative; display: flex; flex-direction: column; height: 100vh; background: #dad9d4; }

.glyph-s { font: 6px "Liberation Sans", sans-serif; fill: #b5b4ae; }
.glyph-m { font: bold 8px "Liberation Serif", serif; fill: #b9b8b2; }
.glyph-l { font: bold 10px "Liberation Sans", sans-serif; fill: #bdbcb6; text-anchor: middle; }
.glyph-n { font: bold 7px "Liberation Sans", sans-serif; fill: #b5b4ae; }
.glyph-q { font: bold 11px "Liberation Sans", sans-serif; fill: #fff; text-anchor: middle; }
.glyph-k { font: bold 10px "DejaVu Sans", sans-serif; fill: #10108c; text-anchor: middle; text-shadow: none; }
.glyph-a { font: bold 14px "Liberation Serif", serif; fill: #34508c; text-anchor: middle; }

.titlebar { display: flex; align-items: center; gap: 3px; height: 21px; padding: 2px 0 0 2px; background: #b5b5ad; border-top: 1px solid #9c9c98; border-bottom: 1px solid #a3a29c; box-shadow: inset 0 1px #e6e6e2; color: #fff; text-shadow: 1px 1px #96968e; }
.title-end { display: flex; align-items: center; gap: 4px; margin-left: auto; align-self: stretch; padding-right: 3px; background: linear-gradient(90deg, #b5b5ad 18px, #cbcac4 32px); }
.mosaic { width: 30px; height: 15px; }
.title-end .mosaic { margin-right: 8px; }
.win { display: grid; place-items: center; width: 15px; height: 15px; border: 1px solid #8c8c86; border-radius: 3px; background: linear-gradient(#f4f4f0, #b9b8b0); color: #77766f; }
.win.flat { border-radius: 0; background: #c6c5be; }
.win svg, .mdi svg { width: 9px; height: 9px; }

.bars { display: flex; flex-direction: column; align-items: flex-start; gap: 1px; padding-bottom: 1px; background: linear-gradient(90deg, #dad9d4, #f7f7f7 68%); }
.grip { width: 3px; height: 14px; margin: 0 0 0 3px; background: repeating-linear-gradient(#a8a7a0 0 2px, transparent 2px 4px); flex: none; }
.menubar { display: flex; align-items: center; align-self: stretch; height: 23px; padding-left: 2px; }
.docicon { width: 18px; height: 18px; margin: 0 2px; }
.menubar > button { padding: 0 7px; height: 20px; }
.menu-end { display: flex; align-items: center; margin-left: auto; gap: 2px; padding-right: 2px; }
.ask { display: flex; height: 18px; background: #fff; border: 1px solid #fff; margin-right: 1px; }
.ask input { width: 134px; padding-left: 2px; }
.ask input::placeholder { color: #8f8e89; opacity: 1; }
.ask .drop { background: #f7f7f7; }
.mdi { display: grid; place-items: center; width: 15px; height: 18px; }

.toolbar { display: flex; align-items: center; height: 25px; margin-left: 2px; border-radius: 3px; background: linear-gradient(#f5f5f3, #eeedea 40%, #d9d8d2); }
.chartbar { margin-left: 130px; }
.formatbar { margin-left: 11px; }
.tb { display: grid; place-items: center; width: 23px; height: 22px; flex: none; }
.tb.on { border: 1px solid #7080a4; background: #e1e4ec; }
.tb.on:disabled { border-color: #b0afa9; background: #e0e0df; }
.letter { font: 15px "Liberation Serif", serif; color: #b9b8b2; }
.num { font: 11px "Liberation Sans", sans-serif; color: #b0afa9; }
.sep { width: 2px; height: 15px; margin: 0 1px 0 3px; border-left: 1px solid #bfbeb7; background: #fff; flex: none; }
.drop { display: grid; place-items: center; width: 11px; height: 100%; flex: none; }
.drop::after { content: ""; border: 3px solid transparent; border-top-color: #000; border-bottom: 0; }
.drop:disabled::after { border-top-color: #aaa9a3; }
.combo { height: 20px; padding: 0 2px 2px; border: 1px solid #b3b2ac; color: #a0a09a; opacity: 1; background: linear-gradient(to top right, transparent 50%, #aaa9a3 50%) right 6px center / 3px 3px no-repeat, linear-gradient(to top left, transparent 50%, #aaa9a3 50%) right 3px center / 3px 3px no-repeat, #d8d7d2; }
.zoom { width: 58px; margin: 0 0 0 2px; }
.series { width: 132px; margin: 0 0 0 2px; }
.font { width: 127px; margin: 0 2px; }
.size { width: 38px; }
.cap { display: grid; align-content: end; justify-items: center; gap: 1px; width: 10px; height: 100%; margin-left: 3px; padding-bottom: 3px; border-radius: 0 3px 3px 0; background: linear-gradient(#dddcd6, #b9b8b0); }
.cap::before { content: ""; width: 5px; height: 1px; background: #000; }
.cap::after { content: ""; border: 3px solid transparent; border-top-color: #000; border-bottom: 0; }

.formulabar { display: flex; align-items: center; height: 18px; background: #fff; border-bottom: 1px solid #c9c8c2; font: 13px/16px "Liberation Sans", sans-serif; flex: none; }
.formulabar > * { height: 100%; }
.namebox { width: 94px; text-align: center; border-left: 2px solid #dad9d4; }
.formulabar .drop { width: 17px; background: #dad9d4; }
.fx { width: 57px; padding-right: 3px; text-align: right; background: #dad9d4; font: 13px/16px "Liberation Serif", serif; }
.formula { flex: 1; padding-left: 4px; }

.work { display: flex; flex: 1; min-height: 0; border-top: 1px solid #9c9c96; background: #dad9d4; }
.sheet { position: relative; flex: 1; overflow: hidden; border-left: 1px solid #9c9c96; margin-left: 1px; background: #fff; }
.grid { table-layout: fixed; width: 1050px; border-spacing: 0; font: 16px/16px "Liberation Serif", serif; }
.grid th, .grid td { height: 17px; padding: 0; border: solid #c0c0c0; border-width: 0 1px 1px 0; }
.grid th { width: 64px; background: #dad9d4; border-color: #c9c8c0; font: 13px/15px "Liberation Sans", sans-serif; }
.grid th:first-child { width: 26px; }
.grid td { padding-right: 2px; text-align: right; line-height: 15px; }
.grid tr:nth-child(4) td { padding-left: 2px; text-align: left; font-size: 13px; }
.grid .tall th, .grid .tall td { height: 21px; }
.grid .line-b { border-bottom-color: #000; }
.grid .line-r { border-right-color: #000; }
.chart { position: absolute; left: 305px; top: 51px; font: 13px "Liberation Sans", sans-serif; }
.ylab { text-anchor: end; }
.xlab { text-anchor: middle; }

.vscroll { display: flex; flex-direction: column; align-items: center; width: 16px; background: #eceae5; }
.split { width: 12px; height: 6px; border: 1px solid #b5b4ae; border-bottom: 1px solid #000; }
.arrow { display: grid; place-items: center; width: 14px; height: 14px; flex: none; }
.arrow::after { content: ""; border: 3px solid transparent; }
.up::after { border-bottom-color: #8c8c86; border-top: 0; }
.down::after { border-top-color: #8c8c86; border-bottom: 0; }
.lft::after { border-right: 4px solid #8c8c86; border-left: 0; }
.rgt::after { border-left: 4px solid #8c8c86; border-right: 0; }
.track { flex: 1; display: flex; }
.vscroll .thumb { width: 11px; height: 93%; border: 1px solid #8c8c86; background: linear-gradient(90deg, #f0efeb, #c9c8c2); }

.tabsbar { display: flex; height: 15px; padding-left: 2px; flex: none; }
.tabnav { display: flex; align-items: center; padding-right: 1px; }
.tabnav button { display: grid; place-items: center; width: 14px; height: 14px; }
.tabnav svg { width: 8px; height: 7px; }
.tabs { display: flex; flex: 1; border-top: 1px solid #b9b8b2; }
.edge { width: 8px; height: 14px; fill: none; stroke: #000; flex: none; }
.tabs button { padding: 0 1px; }
.tabs .current { background: #fff; font-weight: bold; }
.hscroll { display: flex; align-items: center; width: 39%; padding-right: 6px; border-left: 2px solid #000; background: #eceae5; }
.hscroll .track { height: 11px; }
.hscroll .thumb { display: grid; place-items: center; width: 87%; border: 1px solid #8c8c86; background: linear-gradient(#f0efeb, #c9c8c2); }
.hscroll svg { width: 8px; height: 6px; fill: #fff; }
.corner { width: 15px; border-left: 1px solid #000; }

.status { display: flex; align-items: center; height: 20px; padding: 2px 4px 0; border-top: 1px solid #f4f4f1; flex: none; }
.panes { display: flex; gap: 2px; margin-left: auto; }
.panes span { height: 15px; border: 1px solid #e6e5e1; line-height: 14px; display: grid; place-content: center; }
.p1 { width: 34px; }
.p2 { width: 111px; }
.p3 { width: 26px; }
.p4 { width: 33px; }

.taskbar { display: flex; align-items: center; height: 26px; border-top: 1px solid #56637f; background: linear-gradient(#7584a2, #8592ad); color: #fff; text-shadow: 1px 1px 1px #4a5670; flex: none; box-shadow: inset 0 1px #98a4bc; }
.start { width: 16px; margin-left: 28px; }
.start svg { display: block; width: 16px; height: 16px; }
.quick { display: flex; gap: 7px; margin-left: 38px; }
.tasks { display: flex; flex: 1; margin-left: 113px; gap: 3px; }
.tasks button { display: flex; align-items: center; flex: 0 1 88px; gap: 4px; height: 22px; padding-left: 8px; white-space: nowrap; border-radius: 3px; min-width: 0; }
.tasks .active { background: #717f9b; box-shadow: inset 1px 1px 1px #56627c, 1px 1px #9aa6bc; padding-left: 10px; }
.lang { display: flex; align-items: center; gap: 6px; }
.en { width: 16px; height: 16px; background: #6c7a97; }
.tray { display: flex; align-items: center; gap: 3px; height: 100%; margin-left: 6px; padding: 0 14px 0 4px; border-left: 1px solid #5f6c88; }
.chev { border: 4px solid transparent; border-right-color: #d8dde8; border-left: 0; margin-right: 4px; }
.tray time { margin-left: 6px; font-weight: bold; }

.dialog { position: absolute; left: 465px; top: 150px; width: 417px; padding: 1px 2px 12px; background: #dad9d4; border: 1px solid #8c8c86; border-radius: 4px 4px 0 0; box-shadow: inset 1px 1px #fff; }
.dlg-title { display: flex; align-items: center; height: 19px; padding-left: 3px; border: 1px solid #5a6888; border-radius: 3px; background: #808dab; color: #fff; text-shadow: 1px 1px #56637f; }
.dlg-end { display: flex; align-items: center; align-self: stretch; gap: 52px; margin-left: auto; padding-right: 2px; background: linear-gradient(90deg, #808dab 12px, #9aa6be 26px); border-radius: 0 3px 3px 0; }
.close { display: grid; place-items: center; width: 15px; height: 15px; border: 1px solid #7c3c44; border-radius: 3px; background: #c8686c; color: #fff; }
.close svg { width: 9px; height: 9px; }
.dlg-tabs { display: flex; align-items: flex-end; height: 28px; margin: 0 8px; }
.dlg-tabs button { width: 51px; height: 19px; border: 1px solid #a3a29c; border-bottom: 0; background: #e9e9e5; }
.dlg-tabs .sel { width: 78px; height: 22px; margin-bottom: -1px; border-top: 2px solid #8d99b4; border-radius: 3px 3px 0 0; background: #f7f8f4; z-index: 1; }
.panel { margin: 0 6px; padding: 23px 5px 0; height: 326px; border: 1px solid #a3a29c; background: linear-gradient(#f7f8f3, #ededea 45%, #e2e2dd); font-family: "Liberation Sans", sans-serif; }
fieldset { display: grid; align-items: center; margin: 0; padding: 1px 8px 7px 7px; border: 1px solid #cbcbc3; }
legend { padding: 0 1px; margin-left: -4px; color: #1a3c96; }
.name { grid-template-columns: 17px 97px 1fr; grid-template-rows: 18px 24px; width: 377px; height: 64px; }
.forecast { grid-template-columns: 67px 62px 1fr; width: 199px; margin-top: 4px; row-gap: 1px; }
.field { width: 100%; height: 20px; padding: 0 4px; border: 1px solid #a3a29c; background: #fff; }
.field:disabled { width: 72px; background: #d8d7d2; color: #a0a09a; }
input[type="radio"] { width: 13px; height: 13px; border: 1px solid #8c8c86; border-radius: 50%; background: #fff; }
input[type="radio"]:checked { background: radial-gradient(circle, #a3a29c 0 3px, #fff 4px); }
.spin { display: flex; width: 54px; height: 20px; border: 1px solid #a3a29c; background: #fff; }
.spin input { width: 38px; padding-left: 3px; }
.spin > span { display: grid; flex: 1; background: #eceae6; }
.spin button { display: grid; place-items: center; }
.spin button::after { content: ""; border: 3px solid transparent; border-bottom-color: #7c7b76; border-top: 0; }
.spin .dn::after { border: 3px solid transparent; border-top-color: #7c7b76; border-bottom: 0; }
.checks { display: grid; margin-top: 12px; }
.check { display: flex; align-items: center; height: 18px; gap: 1px; }
.check.off { height: 20px; color: #a0a09a; }
.check label { padding: 0 1px; border: 1px solid transparent; line-height: 14px; white-space: nowrap; }
.check .focus { border: 1px dotted #000; }
.check .field { margin-left: 6px; }
input[type="checkbox"] { width: 14px; height: 14px; border: 1px solid #a3a29c; background: #fff; flex: none; }
input[type="checkbox"]:disabled { background: #efefec; }
input[type="checkbox"].hot { background: #dcdcda; }
input[type="checkbox"]:checked { display: grid; place-items: center; }
input[type="checkbox"]:checked::after { content: ""; width: 8px; height: 8px; background: #8c8b86; clip-path: polygon(0 30%, 40% 60%, 100% 0, 100% 40%, 40% 100%, 0 70%); }
.dlg-buttons { display: flex; justify-content: flex-end; gap: 15px; margin: 15px 8px 0; }
.dlg-buttons button { width: 69px; height: 19px; border: 1px solid #8c8c86; border-radius: 3px; background: linear-gradient(#f9f9f7, #deddd8); box-shadow: 0 0 0 1px #d0cfca; }
.dlg-buttons .ok { border-color: #44443f; }
```
